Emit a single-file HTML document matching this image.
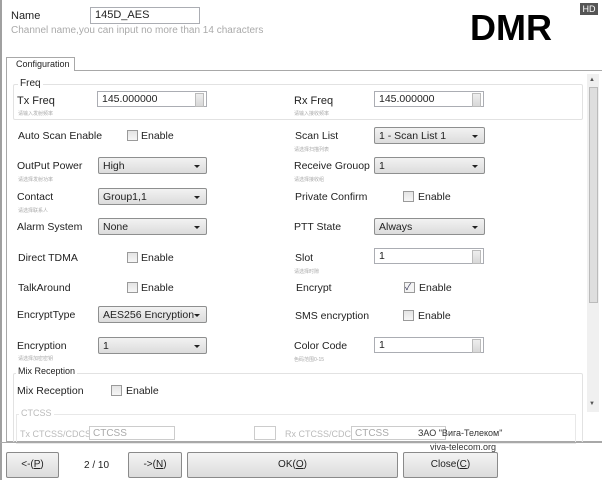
<!DOCTYPE html>
<html><head><meta charset="utf-8"><style>
*{box-sizing:border-box;margin:0;padding:0}
body{width:602px;height:480px;background:#fff;font-family:"Liberation Sans","Noto Sans CJK SC",sans-serif;font-size:10px;color:#222;position:relative;overflow:hidden}
.a{position:absolute;white-space:nowrap}
.lbl{font-size:10.5px;color:#222}
.in{position:absolute;height:16px;border:1px solid #abadb3;background:#fff;padding:1px 4px;font-size:10.5px}
.sp::after{content:"";position:absolute;right:2px;top:1px;width:7px;height:12px;background:linear-gradient(#eee,#d8d8d8);border:1px solid #bbb}
.dd{position:absolute;height:17px;border:1px solid #8e8f8f;border-radius:2px;background:linear-gradient(#f2f2f2,#dcdcdc);padding:2px 4px;font-size:10.5px}
.dd::after{content:"";position:absolute;right:6px;top:7px;border-left:3px solid transparent;border-right:3px solid transparent;border-top:3px solid #222}
.cb{position:absolute;width:11px;height:11px;border:1px solid #9a9a9a;background:linear-gradient(#e4e4e4,#f6f6f6)}
.hint{position:absolute;font-size:5px;color:#aaa;letter-spacing:0}
.btn{position:absolute;top:452px;height:26px;border:1px solid #8a8a8a;border-radius:2px;background:linear-gradient(#f4f4f4,#dcdcdc);text-align:center;line-height:24px;font-size:10px}
</style></head><body>
<div class="a" style="left:0;top:0;width:2px;height:480px;background:#a0a0a0"></div>
<div class="a lbl" style="left:11px;top:10px;font-size:11px">Name</div>
<div class="in" style="left:90px;top:7px;width:110px;height:17px;font-size:11px">145D_AES</div>
<div class="a" style="left:11px;top:25px;color:#aaa;font-size:10px">Channel name,you can input no more than 14 characters</div>
<div class="a" style="left:470px;top:7px;font-size:36px;font-weight:bold;color:#000">DMR</div>
<div class="a" style="left:580px;top:3px;width:18px;height:12px;background:#555;color:#fff;font-size:9px;text-align:center;line-height:12px">HD</div>
<div class="a" style="left:6px;top:70px;width:596px;height:372px;border:1px solid #a8a8a8;border-right:none"></div>
<div class="a" style="left:6px;top:57px;width:69px;height:14px;border:1px solid #a8a8a8;border-bottom:none;background:#fff;font-size:9px;padding:1px 0 0 9px">Configuration</div>
<div class="a" style="left:587px;top:74px;width:12px;height:338px;background:#f0f0f0"></div>
<div class="a" style="left:589px;top:77px;font-size:6px;color:#555">▲</div>
<div class="a" style="left:589px;top:87px;width:9px;height:216px;background:#dedede;border:1px solid #bbb"></div>
<div class="a" style="left:589px;top:401px;font-size:6px;color:#555">▼</div>
<div class="a" style="left:13px;top:84px;width:570px;height:36px;border:1px solid #e2e2e2;border-radius:2px"></div>
<div class="a lbl" style="left:18px;top:78px;background:#fff;padding:0 2px;font-size:10px">Freq</div>
<div class="a lbl" style="left:17px;top:95px;font-size:11px">Tx Freq</div>
<div class="in sp" style="left:97px;top:91px;width:110px">145.000000</div>
<div class="hint" style="left:18px;top:110px">请输入发射频率</div>
<div class="a lbl" style="left:294px;top:95px;font-size:11px">Rx Freq</div>
<div class="in sp" style="left:374px;top:91px;width:110px">145.000000</div>
<div class="hint" style="left:294px;top:110px">请输入接收频率</div>
<div class="a lbl" style="left:18px;top:130px">Auto Scan Enable</div><div class="cb" style="left:127px;top:130px"></div><div class="a lbl" style="left:141px;top:130px">Enable</div>
<div class="a lbl" style="left:17px;top:160px">OutPut Power</div><div class="dd" style="left:98px;top:157px;width:109px">High</div><div class="hint" style="left:18px;top:176px">请选择发射功率</div>
<div class="a lbl" style="left:17px;top:191px">Contact</div><div class="dd" style="left:98px;top:188px;width:109px">Group1,1</div><div class="hint" style="left:18px;top:207px">请选择联系人</div>
<div class="a lbl" style="left:17px;top:221px">Alarm System</div><div class="dd" style="left:98px;top:218px;width:109px">None</div>
<div class="a lbl" style="left:18px;top:252px">Direct TDMA</div><div class="cb" style="left:127px;top:252px"></div><div class="a lbl" style="left:141px;top:252px">Enable</div>
<div class="a lbl" style="left:18px;top:282px">TalkAround</div><div class="cb" style="left:127px;top:282px"></div><div class="a lbl" style="left:141px;top:282px">Enable</div>
<div class="a lbl" style="left:17px;top:309px">EncryptType</div><div class="dd" style="left:98px;top:306px;width:109px">AES256 Encryption</div>
<div class="a lbl" style="left:17px;top:340px">Encryption</div><div class="dd" style="left:98px;top:337px;width:109px">1</div><div class="hint" style="left:18px;top:355px">请选择加密密钥</div>
<div class="a lbl" style="left:295px;top:130px">Scan List</div><div class="dd" style="left:374px;top:127px;width:111px">1 - Scan List 1</div><div class="hint" style="left:294px;top:146px">请选择扫描列表</div>
<div class="a lbl" style="left:294px;top:160px">Receive Grouop</div><div class="dd" style="left:374px;top:157px;width:111px">1</div><div class="hint" style="left:294px;top:176px">请选择接收组</div>
<div class="a lbl" style="left:295px;top:191px">Private Confirm</div><div class="cb" style="left:403px;top:191px"></div><div class="a lbl" style="left:418px;top:191px">Enable</div>
<div class="a lbl" style="left:294px;top:221px">PTT State</div><div class="dd" style="left:374px;top:218px;width:111px">Always</div>
<div class="a lbl" style="left:295px;top:252px">Slot</div><div class="in sp" style="left:374px;top:248px;width:110px">1</div><div class="hint" style="left:294px;top:268px">请选择时隙</div>
<div class="a lbl" style="left:296px;top:282px">Encrypt</div><div class="cb" style="left:404px;top:282px;background:#f4f4f4;font-size:9px;line-height:9px;color:#335">✓</div><div class="a lbl" style="left:419px;top:282px">Enable</div>
<div class="a lbl" style="left:295px;top:310px">SMS encryption</div><div class="cb" style="left:403px;top:310px"></div><div class="a lbl" style="left:418px;top:310px">Enable</div>
<div class="a lbl" style="left:294px;top:340px">Color Code</div><div class="in sp" style="left:374px;top:337px;width:110px">1</div><div class="hint" style="left:294px;top:356px">色码范围0-15</div>
<div class="a" style="left:13px;top:373px;width:570px;height:70px;border:1px solid #e2e2e2;border-radius:2px"></div>
<div class="a lbl" style="left:16px;top:366px;background:#fff;padding:0 2px;font-size:9px">Mix Reception</div>
<div class="a lbl" style="left:17px;top:385px">Mix Reception</div><div class="cb" style="left:111px;top:385px"></div><div class="a lbl" style="left:126px;top:385px">Enable</div>
<div class="a" style="left:16px;top:414px;width:560px;height:30px;border:1px solid #e8e8e8"></div>
<div class="a" style="left:19px;top:408px;background:#fff;padding:0 2px;color:#bbb;font-size:9px">CTCSS</div>
<div class="a" style="left:20px;top:429px;color:#bbb;font-size:9px">Tx CTCSS/CDCSS</div>
<div class="a" style="left:89px;top:426px;width:86px;height:14px;border:1px solid #ccc;color:#aaa;padding:1px 3px;background:#fff">CTCSS</div>
<div class="a" style="left:254px;top:426px;width:22px;height:14px;border:1px solid #ccc"></div>
<div class="a" style="left:285px;top:429px;color:#bbb;font-size:9px">Rx CTCSS/CDCSS</div>
<div class="a" style="left:351px;top:426px;width:95px;height:14px;border:1px solid #ccc;color:#aaa;padding:1px 3px;background:#fff">CTCSS</div>
<div class="a" style="left:0;top:442px;width:602px;height:1px;background:#a8a8a8"></div>
<div class="a" style="left:418px;top:428px;font-size:9px;color:#333">ЗАО "Вига-Телеком"</div>
<div class="a" style="left:430px;top:442px;font-size:9px;color:#333">viva-telecom.org</div>
<div class="btn" style="left:6px;width:53px">&lt;-(<u>P</u>)</div>
<div class="a" style="left:84px;top:460px">2 / 10</div>
<div class="btn" style="left:128px;width:54px">-&gt;(<u>N</u>)</div>
<div class="btn" style="left:187px;width:211px">OK(<u>O</u>)</div>
<div class="btn" style="left:403px;width:95px">Close(<u>C</u>)</div>
</body></html>
